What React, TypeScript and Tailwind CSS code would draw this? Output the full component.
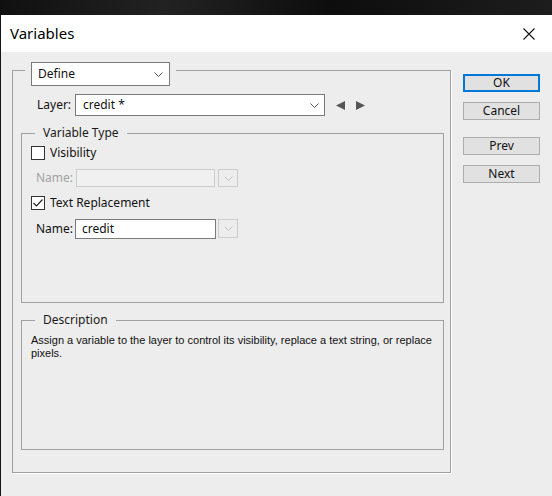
import { ReactNode } from "react";

const font = "font-['Noto_Sans','Liberation_Sans',sans-serif]";

function Chevron({ className = "" }: { className?: string }) {
  return (
    <svg width="9" height="5" viewBox="0 0 9 5" className={className}>
      <path d="M0.5 0.5 L4.5 4.5 L8.5 0.5" fill="none" stroke="currentColor" strokeWidth="1" />
    </svg>
  );
}

function GroupBox({ legend, className = "", children }: { legend: string; className?: string; children?: ReactNode }) {
  return (
    <div className={`relative border border-[#a0a0a0] ${className}`}>
      <span className="absolute left-[13px] -top-[9px] px-[8px] bg-[#ededed] text-[12px] leading-[16px] text-[#1a1a1a]">
        {legend}
      </span>
      {children}
    </div>
  );
}

function Check({ checked }: { checked?: boolean }) {
  return (
    <div className="w-[14px] h-[14px] border border-[#333] bg-white flex items-center justify-center">
      {checked && (
        <svg width="10" height="8" viewBox="0 0 10 8">
          <path d="M0.5 4 L3.5 7 L9.5 0.5" fill="none" stroke="#222" strokeWidth="1.2" />
        </svg>
      )}
    </div>
  );
}

function Button({ label, primary }: { label: string; primary?: boolean }) {
  return (
    <div
      className={`w-[77px] h-[18px] bg-[#e1e1e1] flex items-center justify-center text-[12px] text-[#111] ${
        primary ? "border-2 border-[#0078d7]" : "border border-[#adadad]"
      }`}
    >
      {label}
    </div>
  );
}

export default function App() {
  return (
    <div className={`w-[552px] h-[496px] bg-[#151515] overflow-hidden ${font}`}>
      <div className="h-[15px] bg-[linear-gradient(90deg,#101010,#222_30%,#0d0d0d_60%,#1d1d1d)]" />
      <div className="ml-px h-[481px] bg-[#ededed] flex flex-col">
        {/* title bar */}
        <div className="h-[37px] bg-white flex items-center justify-between pl-[9px] pr-[17px]">
          <span className="text-[15px] text-black">Variables</span>
          <svg width="12" height="12" viewBox="0 0 12 12">
            <path d="M0.5 0.5 L11.5 11.5 M11.5 0.5 L0.5 11.5" stroke="#111" strokeWidth="1.1" />
          </svg>
        </div>

        <div className="flex items-start pl-[11px]">
          {/* main group */}
          <div className="relative mt-[18px] w-[439px] border border-[#a0a0a0] shadow-[1px_1px_0_#fff] pt-[23px] pb-[22px]">
            <div className="absolute left-[12px] -top-[9px] px-[6px] bg-[#ededed]">
              <div className="w-[139px] h-[24px] bg-white border border-[#7a7a7a] flex items-center justify-between pl-[6px] pr-[6px] text-[12px] text-[#111]">
                <span>Define</span>
                <Chevron className="text-[#555]" />
              </div>
            </div>

            <div className="flex items-center pl-[24px] h-[22px]">
              <span className="w-[38px] text-[12px] text-[#111]">Layer:</span>
              <div className="w-[250px] h-[22px] bg-white border border-[#7a7a7a] flex items-center justify-between pl-[7px] pr-[5px] text-[12px] text-[#111]">
                <span>credit *</span>
                <Chevron className="text-[#555]" />
              </div>
              <svg width="9" height="9" viewBox="0 0 9 9" className="ml-[11px]">
                <path d="M0 4.5 L9 0 L9 9 Z" fill="#555" />
              </svg>
              <svg width="9" height="9" viewBox="0 0 9 9" className="ml-[11px]">
                <path d="M9 4.5 L0 0 L0 9 Z" fill="#555" />
              </svg>
            </div>

            <GroupBox legend="Variable Type" className="mt-[17px] ml-[8px] w-[423px] h-[170px] pt-[12px] pl-[9px]">
              <div className="flex items-center h-[14px]">
                <Check />
                <span className="ml-[5px] text-[12px] text-[#111]">Visibility</span>
              </div>
              <div className="flex items-center h-[18px] mt-[9px] pl-[5px]">
                <span className="w-[40px] text-[12px] text-[#a3a3a3]">Name:</span>
                <div className="w-[139px] h-[18px] bg-[#f0f0f0] border border-[#cccccc]" />
                <div className="ml-[3px] w-[20px] h-[18px] border border-[#cccccc] flex items-center justify-center">
                  <Chevron className="text-[#c4c4c4]" />
                </div>
              </div>
              <div className="flex items-center h-[14px] mt-[9px]">
                <Check checked />
                <span className="ml-[5px] text-[12px] text-[#111]">Text Replacement</span>
              </div>
              <div className="flex items-center h-[20px] mt-[9px] pl-[5px]">
                <span className="w-[39px] text-[12px] text-[#111]">Name:</span>
                <div className="w-[141px] h-[20px] bg-white border border-[#7a7a7a] flex items-center pl-[6px] text-[12px] text-[#111]">
                  credit
                </div>
                <div className="ml-[2px] w-[20px] h-[19px] self-start border border-[#cccccc] flex items-center justify-center">
                  <Chevron className="text-[#c4c4c4]" />
                </div>
              </div>
            </GroupBox>

            <GroupBox legend="Description" className="mt-[17px] ml-[8px] w-[423px] h-[130px] pt-[13px] pl-[9px] pr-[4px]">
              <p className="font-['Liberation_Sans',sans-serif] text-[11px] leading-[13px] text-[#111]">
                Assign a variable to the layer to control its visibility, replace a text string, or replace pixels.
              </p>
            </GroupBox>
          </div>

          {/* buttons */}
          <div className="ml-[12px] mt-[22px] flex flex-col">
            <Button label="OK" primary />
            <div className="mt-[10px]"><Button label="Cancel" /></div>
            <div className="mt-[17px]"><Button label="Prev" /></div>
            <div className="mt-[10px]"><Button label="Next" /></div>
          </div>
        </div>
      </div>
    </div>
  );
}
